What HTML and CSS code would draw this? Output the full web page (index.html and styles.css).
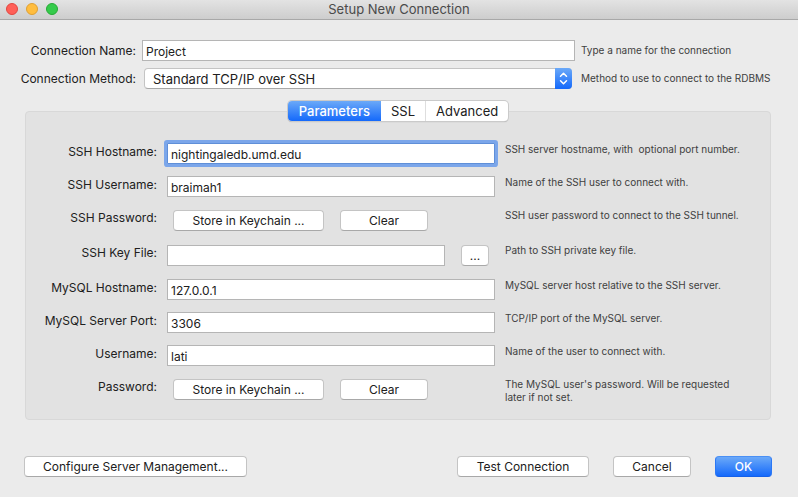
FILE: index.html
```html
<!DOCTYPE html>
<html lang="en">
<head>
<meta charset="utf-8">
<title>Setup New Connection</title>
<link rel="stylesheet" href="styles.css">
</head>
<body>
<header class="titlebar">
  <div class="lights">
    <button class="light close" type="button" aria-label="Close"></button>
    <button class="light minimize" type="button" aria-label="Minimize"></button>
    <button class="light maximize" type="button" aria-label="Zoom"></button>
  </div>
  <h1 class="title">Setup New Connection</h1>
</header>
<form class="dialog">
  <div class="basics">
    <label class="label" for="name">Connection Name:</label>
    <input class="field" id="name" type="text" value="Project">
    <p class="hint">Type a name for the connection</p>
    <label class="label" for="method">Connection Method:</label>
    <div class="popup">
      <select class="select" id="method"><option>Standard TCP/IP over SSH</option></select>
      <svg class="arrows" viewBox="0 0 17 21" aria-hidden="true"><path d="M5.5 8.3 8.5 5.3l3 3M5.5 12.7l3 3 3-3"/></svg>
    </div>
    <p class="hint">Method to use to connect to the RDBMS</p>
  </div>

  <section class="panel">
    <div class="tabs" role="tablist">
      <button class="tab selected" type="button" role="tab" aria-selected="true">Parameters</button>
      <button class="tab" type="button" role="tab" aria-selected="false">SSL</button>
      <button class="tab" type="button" role="tab" aria-selected="false">Advanced</button>
    </div>
    <div class="row">
      <label class="label" for="ssh-host">SSH Hostname:</label>
      <input class="field focused" id="ssh-host" type="text" value="nightingaledb.umd.edu">
      <p class="hint">SSH server hostname, with  optional port number.</p>
    </div>
    <div class="row">
      <label class="label" for="ssh-user">SSH Username:</label>
      <input class="field" id="ssh-user" type="text" value="braimah1">
      <p class="hint">Name of the SSH user to connect with.</p>
    </div>
    <div class="row tall">
      <span class="label">SSH Password:</span>
      <div class="actions">
        <button class="button store" type="button">Store in Keychain ...</button>
        <button class="button clear" type="button">Clear</button>
      </div>
      <p class="hint">SSH user password to connect to the SSH tunnel.</p>
    </div>
    <div class="row tall">
      <label class="label" for="key-file">SSH Key File:</label>
      <div class="file">
        <input class="field" id="key-file" type="text">
        <button class="button browse" type="button">...</button>
      </div>
      <p class="hint">Path to SSH private key file.</p>
    </div>
    <div class="row">
      <label class="label" for="db-host">MySQL Hostname:</label>
      <input class="field" id="db-host" type="text" value="127.0.0.1">
      <p class="hint">MySQL server host relative to the SSH server.</p>
    </div>
    <div class="row">
      <label class="label" for="db-port">MySQL Server Port:</label>
      <input class="field" id="db-port" type="text" value="3306">
      <p class="hint">TCP/IP port of the MySQL server.</p>
    </div>
    <div class="row">
      <label class="label" for="db-user">Username:</label>
      <input class="field" id="db-user" type="text" value="lati">
      <p class="hint">Name of the user to connect with.</p>
    </div>
    <div class="row tall">
      <span class="label">Password:</span>
      <div class="actions">
        <button class="button store" type="button">Store in Keychain ...</button>
        <button class="button clear" type="button">Clear</button>
      </div>
      <p class="hint">The MySQL user's password. Will be requested later if not set.</p>
    </div>
  </section>

  <footer class="footer">
    <button class="button configure" type="button">Configure Server Management...</button>
    <button class="button test" type="button">Test Connection</button>
    <button class="button cancel" type="button">Cancel</button>
    <button class="button ok" type="submit">OK</button>
  </footer>
</form>
</body>
</html>
```
FILE: styles.css
```css
* {
  box-sizing: border-box;
}

body {
  margin: 0;
  min-height: 100vh;
  background: #ebebeb;
  color: #202020;
  font: 12px/18px Inter, "Liberation Sans", sans-serif;
}

button,
input,
select {
  margin: 0;
  font: inherit;
  color: inherit;
}

.titlebar {
  display: grid;
  grid-template-columns: 1fr auto 1fr;
  height: 20px;
  background: linear-gradient(#e3e3e3, #cdcdcd);
  border-bottom: 1px solid #a8a8a8;
}

.lights {
  display: flex;
  gap: 8px;
  padding: 3px 6px;
}

.light {
  width: 12px;
  height: 12px;
  padding: 0;
  border: 1px solid;
  border-radius: 50%;
}

.close {
  background: #ff5f57;
  border-color: #e2463f;
}

.minimize {
  background: #ffbd3e;
  border-color: #dfa033;
}

.maximize {
  background: #35cb4b;
  border-color: #27aa35;
}

.title {
  margin: 0;
  font-size: 13px;
  font-weight: 400;
  color: #4a4a4a;
}

.dialog {
  padding: 20px 26px 20px 24px;
}

.basics {
  display: grid;
  grid-template-columns: 112px minmax(0, 433fr) minmax(0, 191fr);
  gap: 6px;
  row-gap: 7px;
  align-items: center;
}

.label {
  text-align: right;
  white-space: nowrap;
}

.basics .label {
  justify-self: end;
}

.hint {
  margin: 0;
  font-size: 10px;
  line-height: 13px;
  color: #404040;
  white-space: pre-wrap;
}

.basics .hint {
  white-space: nowrap;
}

.field {
  width: 100%;
  min-width: 0;
  height: 21px;
  padding: 2px 3px 0;
  background: #fff;
  border: 1px solid #b5b5b5;
  border-radius: 0;
  outline: 0;
}

.focused {
  border-color: #5f8fd8;
  box-shadow: 0 0 0 3px #7ba6ea;
  border-radius: 1px;
}

.popup {
  position: relative;
  height: 21px;
  margin: 0 3px 0 2px;
}

.select {
  display: block;
  width: 100%;
  height: 21px;
  padding: 0 24px 0 8px;
  appearance: none;
  background: #fff;
  border: 1px solid #c4c4c4;
  border-bottom-color: #a8a8a8;
  border-radius: 4px;
  font-size: 13px;
}

.arrows {
  position: absolute;
  top: 0;
  right: 0;
  width: 17px;
  height: 21px;
  background: linear-gradient(#6ba9f8, #1469fb);
  border-radius: 0 4px 4px 0;
  fill: none;
  stroke: #fff;
  stroke-width: 1.5;
  stroke-linecap: round;
  stroke-linejoin: round;
  pointer-events: none;
}

.panel {
  margin: 22px 1px 0;
  padding-bottom: 6px;
  background: #e2e2e2;
  border: 1px solid #d8d8d8;
  border-radius: 4px;
}

.tabs {
  display: flex;
  width: max-content;
  margin: -11px auto 22px;
  background: #fff;
  border-radius: 4px;
  box-shadow: 0 0 0 1px #cacaca, 0 1px 1px #a0a0a0;
  font-size: 13px;
}

.tab {
  height: 20px;
  padding: 0 10px;
  background: none;
  border: 0;
  border-left: 1px solid #dedede;
}

.tab.selected {
  padding: 0 11px;
  background: linear-gradient(#6ba9f8, #1469fb);
  border: 0;
  border-radius: 4px 0 0 4px;
  color: #fff;
  font-weight: 500;
}

.selected + .tab {
  border-left: 0;
}

.row {
  display: grid;
  grid-template-columns: 131px minmax(0, 328fr) minmax(0, 246fr);
  column-gap: 10px;
  align-items: start;
  min-height: 33px;
  padding-right: 19px;
}

.tall {
  min-height: 35px;
}

.actions,
.file {
  display: flex;
  gap: 16px;
  padding: 1px 6px 0;
}

.file {
  padding-left: 0;
}

.button {
  height: 21px;
  padding: 0 4px;
  background: #fff;
  border: 1px solid #c4c4c4;
  border-bottom-color: #a8a8a8;
  border-radius: 4px;
  white-space: nowrap;
}

.store {
  width: 151px;
}

.clear {
  width: 88px;
}

.browse {
  flex: none;
  width: 28px;
}

.footer {
  display: flex;
  gap: 24px;
  margin-top: 36px;
}

.configure {
  width: 223px;
  margin-right: auto;
}

.test {
  width: 132px;
}

.cancel {
  width: 78px;
}

.ok {
  width: 57px;
  background: linear-gradient(#6ba9f8, #1469fb);
  border-color: #4a90f5 #2b78f5 #1560e8;
  color: #fff;
  font-weight: 500;
}
```
